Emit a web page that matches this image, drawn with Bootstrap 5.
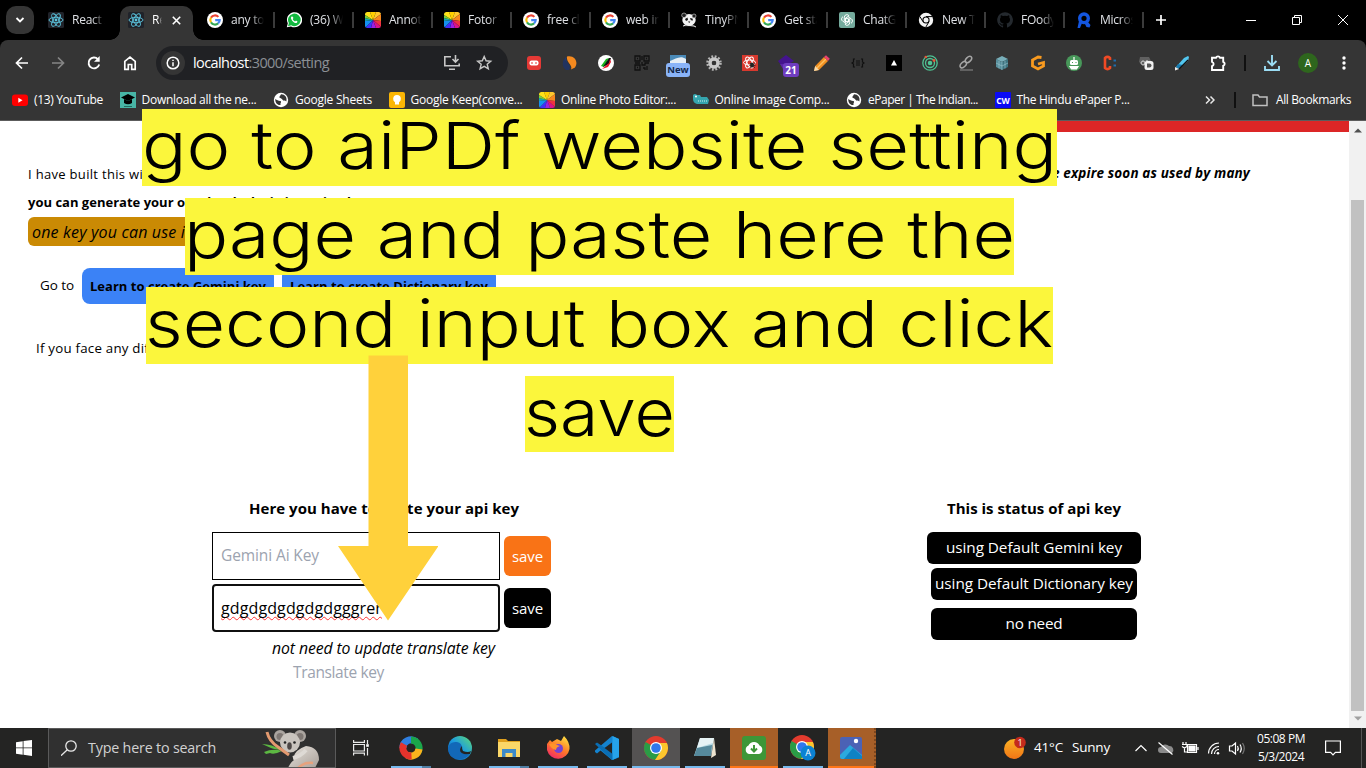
<!DOCTYPE html>
<html lang="en">
<head>
<meta charset="utf-8">
<title>Settings</title>
<link href="https://cdn.jsdelivr.net/npm/bootstrap@5.3.0/dist/css/bootstrap.min.css" rel="stylesheet">
<style>
body{width:1366px;height:768px;overflow:hidden;font-family:"Open Sans","Noto Sans",sans-serif;color:#000;background:#fff;line-height:1}
svg{display:block;flex:none}
.fit{display:inline-block;white-space:nowrap}
/* tab strip */
.tabstrip{height:40px;background:#000;font-size:12px;color:#dfe1e5}
.tab-search{width:28px;height:28px;border-radius:10px;background:#353535;margin:0 3px 0 6px}
.tab-slot{width:79px;padding-left:11px;gap:8px;position:relative}
.tab-slot.sep{border-right:2px solid #3b3b3b;height:16px}
.tab-title{width:33px;overflow:hidden;white-space:nowrap;line-height:18px;letter-spacing:-.25px;-webkit-mask-image:linear-gradient(90deg,#000 60%,transparent);mask-image:linear-gradient(90deg,#000 60%,transparent)}
.tab-active{height:34px;margin-top:6px;padding-bottom:6px;background:#353535;border-radius:10px 10px 0 0;width:73px;margin-left:4px;margin-right:3px;padding-left:8px;gap:8px;color:#fff;position:relative}
.tab-active .tab-title{width:10px}
.tab-active::before,.tab-active::after{content:"";position:absolute;bottom:0;width:10px;height:10px}
.tab-active::before{left:-10px;background:radial-gradient(circle at 0 0,transparent 9.5px,#353535 10px)}
.tab-active::after{right:-10px;background:radial-gradient(circle at 100% 0,transparent 9.5px,#353535 10px)}
/* toolbar */
.chrome-bars{background:#353535;height:81px;border-radius:8px 8px 0 0;border-bottom:1px solid #5c5c5c;color:#fff}
.chrome-wrap{background:#000}
.toolbar{height:46px;padding:0 4px}
.cell{width:36px;height:36px;display:flex;align-items:center;justify-content:center;position:relative}
.omnibox{width:352px;height:34px;border-radius:17px;background:#202124;margin:0 8px;padding-left:5px;font-size:14.5px;color:#8b8f94}
.info-dot{width:24px;height:24px;border-radius:50%;background:#353535;margin-right:8px}
.tag{position:absolute;border-radius:3px;font-weight:700;text-align:center}
.vline{width:2px;height:16px;background:#101010}
.avatar{width:20px;height:20px;border-radius:50%;background:#2e661d;font-size:10px}
.bookmarks{height:28px;padding-left:12px;gap:16.5px;font-size:12px}
.bookmarks .item{gap:6px;height:20px}
/* page */
.viewport{height:607px}
.page{width:1349px;height:607px;position:relative}
.red-bar{height:11px;width:700px;background:#dc2626}
.scroller{width:17px;background:#f1f1f1;padding:7px 0 7px}
.thumb{width:13px;height:511px;background:#c1c1c1;margin:67px 0 5px}
.gold{background:#ca8a04;width:400px;height:29px;border-radius:6px;padding-left:4px;font-size:16px;font-style:italic;font-weight:500}
.learn{background:#3b82f6;height:36px;border-radius:8px;font-size:13px;font-weight:700;padding:0 8px}
.dark-chip{width:54px;height:28px;border-radius:8px;background:#1b1b1b;margin-top:2px}
.key-input{width:288px;height:48px;border:1px solid #000;padding-left:8px;font-size:15.5px;color:#9ca3af}
.key-input.focused{border:2px solid #101010;border-radius:4px;padding-left:7px;color:#000}
.save{width:47px;height:40px;border-radius:6px;color:#fff;font-size:15px}
.misspelt{font-size:16px;text-decoration:underline wavy #f33 1px;text-underline-offset:2px;text-decoration-skip-ink:none}
.status{background:#000;color:#fff;height:32px;border-radius:6px;width:206px;font-size:15.3px}
.caption{position:absolute;left:0;top:-11.7px;width:1199px;gap:12.4px}
.caption svg{background:#fbf63c}
.caption text{font-family:"Inter","Lato",sans-serif;font-weight:300;font-size:65px}
.arrow{position:absolute;left:338px;top:234px}
/* taskbar */
.taskbar{height:40px;background:#242423;color:#fff}
.searchbox{width:288px;height:40px;border:1px solid #5a5a5a;background:#303030;padding-left:12px;color:#d2d2d2;font-size:14.3px}
.app{width:48px;height:40px;margin-right:1px;display:flex;align-items:center;justify-content:center;position:relative;padding-bottom:1px}
.app.run::after{content:"";position:absolute;left:4px;right:4px;bottom:0;height:2px;background:#76b9ed}
.app.many::after{background:linear-gradient(90deg,#76b9ed 31px,#4f7ea3 31px)}
.app.front{background:#545252}
.app.front::after,.app.alert-on::after{left:0;right:0}
.app.alert-on{background:#a75f28}
.app.alert-on::after{background:#ff7518}
.clock{font-size:12px;line-height:18px;width:50px}
</style>
</head>
<body>
<svg width="0" height="0" class="position-absolute">
<defs>
<linearGradient id="edgeG" x1="0" y1="1" x2="1" y2="0"><stop offset="0" stop-color="#0b4fa0"/><stop offset=".5" stop-color="#1c9be0"/><stop offset="1" stop-color="#5edc74"/></linearGradient>
<linearGradient id="foxG" x1="0.8" y1="0" x2=".2" y2="1"><stop offset="0" stop-color="#ffe040"/><stop offset=".5" stop-color="#ff7a28"/><stop offset="1" stop-color="#f0246a"/></linearGradient>
<linearGradient id="sunG" x1="0" y1="0" x2="0" y2="1"><stop offset="0" stop-color="#fbb324"/><stop offset="1" stop-color="#f27516"/></linearGradient>
<linearGradient id="furG" x1="0" y1="0" x2="1" y2="1"><stop offset="0" stop-color="#e8e4de"/><stop offset="1" stop-color="#a89f98"/></linearGradient>
<symbol id="react" viewBox="0 0 16 16"><rect width="16" height="16" rx="1.5" fill="#20232a"/><g fill="none" stroke="#5cc6e0" stroke-width=".9"><ellipse cx="8" cy="8" rx="7" ry="2.7"/><ellipse cx="8" cy="8" rx="7" ry="2.7" transform="rotate(60 8 8)"/><ellipse cx="8" cy="8" rx="7" ry="2.7" transform="rotate(120 8 8)"/></g><circle cx="8" cy="8" r="1.4" fill="#5cc6e0"/></symbol>
<symbol id="goog" viewBox="0 0 16 16"><circle cx="8" cy="8" r="8" fill="#fff"/><g fill="none" stroke-width="2.1"><path d="M11.4 4.9A4.7 4.7 0 0 0 4 5.6" stroke="#ea4335"/><path d="M4 5.6a4.7 4.7 0 0 0 0 4.8" stroke="#fbbc05"/><path d="M4 10.4a4.7 4.7 0 0 0 7.1 1" stroke="#34a853"/><path d="M11.1 11.4a4.6 4.6 0 0 0 1.6-3.3H8.2" stroke="#4285f4"/></g></symbol>
<symbol id="wa" viewBox="0 0 16 16"><path d="M.8 15.3l1-4A7.6 7.6 0 1 1 5 14.5z" fill="#fff"/><path d="M2 14.2l.9-3.2A6.3 6.3 0 1 1 5.200 13.300z" fill="#12b93f"/><path d="M5.600 4.600c-1 .8-.8 2.300.6 4.100 1.700 2 3.600 2.800 4.700 2 .8-.7.6-1.200-.1-1.600-1-.6-1.100-.5-1.700.3-1-.3-2-1.300-2.400-2.300.7-.6.8-.8.5-1.500-.4-1-.9-1.500-1.600-1z" fill="#fff"/></symbol>
<symbol id="fotor" viewBox="0 0 16 16"><clipPath id="rc"><rect width="16" height="16" rx="2.500"/></clipPath><g clip-path="url(#rc)"><path d="M8 8L0 3V0h5z" fill="#ffe21a"/><path d="M8 8L5 0h6z" fill="#ffd000"/><path d="M8 8l3-8h5v2z" fill="#ffc82e"/><path d="M8 8l8-6v7z" fill="#f7881f"/><path d="M8 8l8 1v6z" fill="#ef3340"/><path d="M8 8l8 7v1h-5z" fill="#d9138a"/><path d="M8 8l3 8H6z" fill="#9a20e0"/><path d="M8 8l-2 8H0z" fill="#3f30f8"/><path d="M8 8l-8 8V9z" fill="#1590f0"/><path d="M8 8L0 9V6z" fill="#17a9b0"/><path d="M8 8L0 6V3z" fill="#7ad038"/></g></symbol>
<symbol id="panda" viewBox="0 0 16 16"><ellipse cx="8" cy="8" rx="6.700" ry="6" fill="#f2f2f2"/><circle cx="3" cy="3.300" r="2.300" fill="#202020" stroke="#ddd" stroke-width=".6"/><circle cx="13" cy="4" r="2" fill="#202020" stroke="#ddd" stroke-width=".6"/><path d="M4 7l2.500-1.500L7 8 5 9zM9 6l2.500.5.5 2-2.200-.3zM7 9.500h2.400L8.200 11zM4 13c3 2 8 1 9-1l2 3H2z" fill="#151515"/><path d="M2 14l3-1 8 1 2 1" stroke="#eee" fill="none"/></symbol>
<symbol id="gpt" viewBox="0 0 16 16"><rect width="16" height="16" rx="2" fill="#74aa9c"/><g fill="none" stroke="#fff" stroke-width="1"><path d="M5.300 9.500V5.200a2.600 2.600 0 0 1 4.800-1.300L6.500 6v4.600M6.700 11l-3-1.800A2.600 2.600 0 0 1 4 4.700M9.300 5l3 1.800a2.600 2.600 0 0 1-.3 4.500M10.700 6.500v4.300a2.600 2.600 0 0 1-4.800 1.300l3.600-2V6.500"/><path d="M6.500 7.200L8 6.300l1.500.9v1.700L8 9.700l-1.500-.8z"/></g></symbol>
<symbol id="chromew" viewBox="0 0 16 16"><circle cx="8" cy="8" r="7.200" fill="#f4f4f4"/><circle cx="8" cy="8" r="3.600" fill="#000"/><circle cx="8" cy="8" r="2.500" fill="#f4f4f4"/><path d="M8 4.600h6.500M5 9.700L1.900 4.500M11 9.700L7.800 15.100" stroke="#000" stroke-width="1"/></symbol>
<symbol id="gh" viewBox="0 0 16 16"><path d="M8 .2a7.800 7.800 0 0 0-2.500 15.200c.4.1.6-.2.600-.4v-1.500c-2.200.5-2.700-1-2.700-1-.4-.9-.9-1.100-.9-1.100-.7-.5.100-.5.100-.5.800.1 1.200.8 1.200.8.700 1.200 1.900.9 2.300.7.100-.5.300-.9.500-1.100-1.800-.2-3.600-.9-3.600-3.900 0-.9.300-1.500.8-2.100-.1-.2-.4-1 .1-2.100 0 0 .7-.2 2.100.8a7 7 0 0 1 4 0c1.500-1 2.100-.8 2.100-.8.500 1.100.2 1.900.1 2.100.5.600.8 1.200.8 2.100 0 3-1.800 3.700-3.600 3.900.3.200.6.700.6 1.500V15c0 .2.100.5.600.4A7.800 7.800 0 0 0 8 .2z" fill="#24292e"/></symbol>
<symbol id="rq" viewBox="0 0 16 16"><circle cx="8" cy="6.300" r="4.300" fill="none" stroke="#1456e0" stroke-width="3.400"/><path d="M3 9l3 2-2 5H1.500zM8 10l3.500-.5 3 3.500-1 2.500-3-.5z" fill="#1456e0"/></symbol>
<symbol id="globe" viewBox="0 0 16 16"><circle cx="8" cy="8" r="7.200" fill="#fff"/><path d="M2.200 7C4 8 5.500 9.200 7.500 9c1 .5.5 1.500 0 2.200V13c-3 .4-5.300-2-5.300-6zM8 2.200c-.5 1.500-2 2-1.500 3.500 1 .6 2.500.5 3 2 .7 1.500 3 .3 3.800 1.800C14.500 5 11.500 2 8 2.200z" fill="#353535"/></symbol>
<symbol id="chrome" viewBox="0 0 24 24"><circle cx="12" cy="12" r="12" fill="#e33b2e"/><path d="M12 12L1.600 6A12 12 0 0 0 11 24l6.500-9z" fill="#2a9c46"/><path d="M12 7h10.900A12 12 0 0 1 11 24l6-9z" fill="#fcc62d"/><circle cx="12" cy="12" r="6" fill="#fff"/><circle cx="12" cy="12" r="4.800" fill="#3078ec"/></symbol>
</defs>
</svg>

<div class="tabstrip d-flex align-items-center">
  <div class="tab-search d-flex align-items-center justify-content-center"><svg width="10" height="8" fill="none" stroke="#fff" stroke-width="1.800"><path d="M1.500 2L5 5.500 8.500 2"/></svg></div>
  <div class="tab-slot d-flex align-items-center"><svg width="16" height="16"><use href="#react"/></svg><div class="tab-title">React App</div></div>
  <div class="tab-active d-flex align-items-center"><svg width="16" height="16"><use href="#react"/></svg><div class="tab-title">Re</div><svg width="9" height="9" style="margin-left:2px" stroke="#fff" stroke-width="1.600"><path d="M.8.800l7.400 7.400M8.200.800L.8 8.200"/></svg></div>
  <div class="tab-slot sep d-flex align-items-center"><svg width="16" height="16"><use href="#goog"/></svg><div class="tab-title">any tools</div></div>
  <div class="tab-slot sep d-flex align-items-center"><svg width="16" height="16"><use href="#wa"/></svg><div class="tab-title">(36) Wh</div></div>
  <div class="tab-slot sep d-flex align-items-center"><svg width="16" height="16"><use href="#fotor"/></svg><div class="tab-title">Annotate</div></div>
  <div class="tab-slot sep d-flex align-items-center"><svg width="16" height="16"><use href="#fotor"/></svg><div class="tab-title">Fotor - </div></div>
  <div class="tab-slot sep d-flex align-items-center"><svg width="16" height="16"><use href="#goog"/></svg><div class="tab-title">free clip</div></div>
  <div class="tab-slot sep d-flex align-items-center"><svg width="16" height="16"><use href="#goog"/></svg><div class="tab-title">web im</div></div>
  <div class="tab-slot sep d-flex align-items-center"><svg width="16" height="16"><use href="#panda"/></svg><div class="tab-title">TinyPNG</div></div>
  <div class="tab-slot sep d-flex align-items-center"><svg width="16" height="16"><use href="#goog"/></svg><div class="tab-title">Get start</div></div>
  <div class="tab-slot sep d-flex align-items-center"><svg width="16" height="16"><use href="#gpt"/></svg><div class="tab-title">ChatGPT</div></div>
  <div class="tab-slot sep d-flex align-items-center"><svg width="16" height="16"><use href="#chromew"/></svg><div class="tab-title">New Tab</div></div>
  <div class="tab-slot sep d-flex align-items-center"><svg width="16" height="16"><use href="#gh"/></svg><div class="tab-title">FOody</div></div>
  <div class="tab-slot sep d-flex align-items-center"><svg width="16" height="16"><use href="#rq"/></svg><div class="tab-title">Microso</div></div>
  <svg width="221" height="40" fill="none" stroke="#fff"><path d="M12 20h10M17 15v10" stroke-width="1.700"/><path d="M102 20.500h10M148.500 17.500h7v7h-7zM150.500 17.500v-2h7v7h-2M194 15l10 10M204 15l-10 10"/></svg>
</div>

<div class="chrome-wrap">
<div class="chrome-bars">
  <div class="toolbar d-flex align-items-center">
    <div class="cell"><svg width="16" height="16" fill="none" stroke="#fff" stroke-width="1.700"><path d="M14 8H3M8 2.500L2.500 8 8 13.500"/></svg></div>
    <div class="cell"><svg width="16" height="16" fill="none" stroke="#858585" stroke-width="1.700"><path d="M2 8h11M8 2.500L13.500 8 8 13.500"/></svg></div>
    <div class="cell"><svg width="16" height="16" fill="none" stroke="#fff" stroke-width="1.900"><path d="M13.200 9.500A5.400 5.400 0 1 1 12 4.300"/><path d="M13.700 1v5.700H8z" fill="#fff" stroke="none"/></svg></div>
    <div class="cell"><svg width="16" height="16" fill="none" stroke="#fff" stroke-width="1.700"><path d="M2.800 6.300L8 2.200l5.200 4.100v8H9.700V9.500H6.300v4.800H2.800z"/></svg></div>
    <div class="omnibox d-flex align-items-center">
      <div class="info-dot d-flex align-items-center justify-content-center"><svg width="14" height="14"><circle cx="7" cy="7" r="5.800" fill="none" stroke="#fff" stroke-width="1.500"/><path d="M7 6.300v4M7 3.700v1.400" stroke="#fff" stroke-width="1.500"/></svg></div>
      <span class="fit" data-w="136"><span class="text-white">localhost</span>:3000/setting</span>
      <svg class="ms-auto" width="65" height="18" fill="none" stroke="#c7c7c7" stroke-width="1.600"><path d="M8 2.800H1.800v9h14.400V9.500M6 15.300h6M12.500 1v6M9.500 5l3 3 3-3"/><path d="M41.200 2.500l1.900 4.300 4.600.4-3.500 3 1.100 4.500-4.100-2.400-4.100 2.400 1.100-4.500-3.500-3 4.600-.4z" stroke-width="1.400"/></svg>
    </div>
    <div class="cell"><svg width="16" height="16"><rect x="1" y="1" width="14" height="14" rx="3" fill="#e53935"/><rect x="3.500" y="5.500" width="9" height="5" rx="2" fill="#fff"/><path d="M5 8h2M9 8h2" stroke="#e53935"/></svg></div>
    <div class="cell"><svg width="16" height="16"><path d="M5 1c-3 3 2 6 1 13C1 13-1 6 5 1z" fill="#223a70"/><path d="M2.500 4c2 4 8 6 4.500 11H4C0 12 0 7 2.500 4z" fill="#22335f"/><path d="M5 1.500c7-2 12 5 8 11l-4 2c2-5-5-7-4-13z" fill="#f58a1f"/></svg></div>
    <div class="cell"><svg width="16" height="16"><circle cx="8" cy="8" r="8" fill="#fff"/><path d="M3 11l5-7 3-1-5 9z" fill="#19b51e"/><path d="M5 12l6-9 2 0-2 6z" fill="#111"/><path d="M4 14l7-6 1-4 1 3-3 5z" fill="#e8152a"/></svg></div>
    <div class="cell"><svg width="16" height="16" fill="none" stroke="#111" stroke-width="1.300"><path d="M1 1h5v5H1zM10 1h5v5h-5zM1 10h5v5H1z"/><path d="M3 3.500h1M12 3.500h1M3 12.500h1M8 1v4M1 8h5M8 7v3h3V8h4M9 13h2v2M13 11v4"/></svg></div>
    <div class="cell"><svg width="16" height="16"><rect width="16" height="15" fill="#e6eef5"/><path d="M0 0h16v4C10 0 6 4 0 6z" fill="#4a8ab8"/></svg><span class="tag" style="left:6px;top:18px;width:24px;height:14px;background:#8ab4f8;color:#14284a;font-size:9.500px;line-height:14px">New</span></div>
    <div class="cell"><svg width="16" height="16"><circle cx="8" cy="8" r="6.500" fill="none" stroke="#b5b5b5" stroke-width="2.500" stroke-dasharray="1.800 1.600"/><circle cx="8" cy="8" r="4" fill="none" stroke="#c8c8c8" stroke-width="3.400"/><circle cx="8" cy="8" r="2" fill="#333"/></svg></div>
    <div class="cell"><svg width="16" height="16"><rect width="16" height="16" fill="#d8392e"/><g fill="none" stroke="#fff"><ellipse cx="7.500" cy="7.500" rx="6" ry="2.500"/><ellipse cx="7.500" cy="7.500" rx="6" ry="2.500" transform="rotate(60 7.500 7.500)"/><ellipse cx="7.500" cy="7.500" rx="6" ry="2.500" transform="rotate(120 7.500 7.500)"/></g><ellipse cx="10" cy="10" rx="2" ry="2.500" fill="#222"/><path d="M8 8l5 5M13 8l-5 5M7.500 10.500h6" stroke="#222" stroke-width=".7"/></svg></div>
    <div class="cell"><svg width="16" height="16"><path d="M8 0l8 6-5 3-8 1-3-4z" fill="#44148e"/><path d="M2 9h8v5H5z" fill="#5a25a8"/></svg><span class="tag" style="left:15px;top:18px;width:16px;height:14px;background:#6f3dc0;color:#fff;font-size:10px;line-height:14px">21</span></div>
    <div class="cell"><svg width="16" height="16"><path d="M0 16l1.200-5L10 2l4 4-9 9z" fill="#ef8f22"/><path d="M3 13L12 4" stroke="#ffc05c" stroke-width="1.500"/><path d="M10 2l2-1.800 3.800 3.600L14 6z" fill="#e8416d"/><path d="M0 16l1.200-5L5 15z" fill="#f7dcae"/></svg></div>
    <div class="cell"><svg width="14" height="10" fill="none" stroke="#111" stroke-width="1.200"><path d="M4 1H2.500v3L1 5l1.500 1v3H4M10 1h1.500v3L13 5l-1.500 1v3H10M5 3h4M5 5h4M5 7h4"/></svg></div>
    <div class="cell"><svg width="16" height="16"><path d="M0 0h16v16H0z"/><path d="M8 5l3 5.500H5z" fill="#fff"/></svg></div>
    <div class="cell"><svg width="16" height="16" fill="none" stroke="#4fc493" stroke-width="1.300"><circle cx="8" cy="8" r="7.200"/><circle cx="8" cy="8" r="4.500"/><circle cx="8" cy="8" r="1.600" fill="#4fc493"/><circle cx="3.800" cy="2" r="1.300" fill="#e25a3a" stroke="none"/><circle cx="12" cy="5.500" r="1.400" fill="#e25a3a" stroke="none"/></svg></div>
    <div class="cell"><svg width="16" height="16" fill="none" stroke="#a5a5a5" stroke-width="1.500"><ellipse cx="10.500" cy="4.500" rx="3.800" ry="2.300" transform="rotate(-45 10.500 4.500)"/><ellipse cx="5.300" cy="9.700" rx="3.800" ry="2.300" transform="rotate(-45 5.300 9.700)"/><path d="M2 15h13" stroke="#707070"/></svg></div>
    <div class="cell"><svg width="16" height="16"><path d="M8 1l6 3-6 3-6-3z" fill="#78aeb9"/><path d="M2 4l6 3v8l-6-3z" fill="#578e9b"/><path d="M14 4L8 7v8l6-3z" fill="#3e7480"/><path d="M8 7v8M5 5.500v8M11 5.500v8M2 8l6 3 6-3" stroke="#9cc8d0" stroke-width=".6" fill="none"/></svg></div>
    <div class="cell"><svg width="16" height="16" fill="none" stroke="#f89a1f" stroke-width="2.800"><path d="M11.500 2.500L8 2 2.500 5v6L8 14l5.500-3V7.500L8 9"/></svg></div>
    <div class="cell"><svg width="16" height="16"><circle cx="8" cy="8" r="8" fill="#48985a"/><rect x="4" y="5" width="8" height="5" rx="1.500" fill="#fff"/><path d="M8 2v3M4 11.500h8L10.500 14h-5z" stroke="#fff" fill="#fff" stroke-width="1.200"/><path d="M6 7h1v1H6zM9.500 7h1v1h-1z" fill="#48985a"/></svg></div>
    <div class="cell"><svg width="16" height="16"><path d="M8 5V3Q5.500 .8 3 3v10Q5.500 15.200 8 13v-2" fill="none" stroke="#f04a25" stroke-width="2.600"/><path d="M11.500 4.500H14v2h-2.500zM11.500 9.500H14v2h-2.500z" fill="#1f6dad"/></svg></div>
    <div class="cell"><svg width="16" height="16"><path d="M2 2h9l2 4v4H5L1 7z" fill="#606060"/><path d="M5 6a2 2 0 1 0 .1 0zM9 5v5" fill="none" stroke="#ddd"/><rect x="6.500" y="6" width="9" height="9" rx="2.500" fill="#f1f1f1"/><path d="M9 8.500h2.500a2 2 0 0 1 0 4H9z" fill="#555"/></svg></div>
    <div class="cell"><svg width="16" height="16"><path d="M2 12L10 3l4-2 1 1-1 4-9 8z" fill="#52c6ef"/><path d="M2 12l2-3 5 1-4 4z" fill="#187cb2"/><path d="M1 12l4 2-4 1.500z" fill="#eee"/><path d="M5 14l9-9" stroke="#111" stroke-width="1.200"/></svg></div>
    <div class="cell"><svg width="18" height="18" fill="none" stroke="#fff" stroke-width="1.900"><path d="M3 3.800h4a2.100 2.100 0 0 1 4 0h3.200v4a2.100 2.100 0 0 1 0 4v4.200H3v-3.800a2.300 2.300 0 0 0 0-4.400z"/></svg></div>
    <div style="width:18px" class="d-flex justify-content-center"><div class="vline"></div></div>
    <div class="cell"><svg width="16" height="16" fill="none" stroke="#9bdcf3" stroke-width="1.900"><path d="M8 0v10M3.500 6L8 10.500 12.500 6M1 11v4h14v-4"/></svg></div>
    <div class="cell"><div class="avatar d-flex align-items-center justify-content-center">A</div></div>
    <div class="cell"><svg width="4" height="16" fill="#fff"><circle cx="2" cy="3" r="1.700"/><circle cx="2" cy="8" r="1.700"/><circle cx="2" cy="13" r="1.700"/></svg></div>
  </div>
  <div class="bookmarks d-flex align-items-center">
    <div class="item d-flex align-items-center"><svg width="16" height="16"><rect y="2.500" width="16" height="11.500" rx="3" fill="#f00"/><path d="M6.300 5.800v5l4.200-2.500z" fill="#fff"/></svg><span class="fit" data-w="69">(13) YouTube</span></div>
    <div class="item d-flex align-items-center"><svg width="16" height="16"><rect width="16" height="16" fill="#48b5a6"/><path d="M8 2l7 3.500L8 9 1 5.500z"/><path d="M4 7v4q4 2.500 8 0V7L8 9z"/><path d="M4 14.500h8" stroke="#226b60"/></svg><span class="fit" data-w="115">Download all the ne...</span></div>
    <div class="item d-flex align-items-center"><svg width="16" height="16"><use href="#globe"/></svg><span class="fit" data-w="77">Google Sheets</span></div>
    <div class="item d-flex align-items-center"><svg width="16" height="16"><rect width="16" height="16" rx="2" fill="#fbb604"/><circle cx="8" cy="6.800" r="3.800" fill="#fff"/><path d="M6 9h4v3.500H6z" fill="#fff"/></svg><span class="fit" data-w="112">Google Keep(conve...</span></div>
    <div class="item d-flex align-items-center"><svg width="16" height="16"><use href="#fotor"/></svg><span class="fit" data-w="115">Online Photo Editor:...</span></div>
    <div class="item d-flex align-items-center"><svg width="16" height="16"><path d="M0 3q2-2 4 0h3l1 2h6l2 3-1 4H4Q0 11 0 7z" fill="#35a5ae"/><path d="M5 9h9" stroke="#d8f0f2" stroke-dasharray="1 1"/><circle cx="3" cy="4.500" r="1" fill="#fff"/></svg><span class="fit" data-w="115">Online Image Comp...</span></div>
    <div class="item d-flex align-items-center"><svg width="16" height="16"><use href="#globe"/></svg><span class="fit" data-w="110">ePaper | The Indian...</span></div>
    <div class="item d-flex align-items-center"><svg width="16" height="16"><rect width="16" height="16" rx="1" fill="#0a0af5"/><text x="8" y="11.500" text-anchor="middle" font-size="8.500" font-weight="700" fill="#fff">CW</text></svg><span class="fit" data-w="113">The Hindu ePaper P...</span></div>
    <svg width="10" height="10" class="ms-auto" fill="none" stroke="#e8e8e8" stroke-width="1.500" style="margin-right:2px"><path d="M1 1.500L4.500 5 1 8.500M5.500 1.500L9 5 5.500 8.500"/></svg>
    <div class="vline"></div>
    <div class="item d-flex align-items-center" style="gap:8px;padding-right:15px"><svg width="16" height="14" fill="none" stroke="#c0c0c0" stroke-width="1.500"><path d="M1 12V2h5l1.500 2H15v8.500H1z"/></svg><span class="fit" data-w="75">All Bookmarks</span></div>
  </div>
</div>
</div>

<div class="viewport d-flex">
  <main class="page">
    <div class="red-bar ms-auto"></div>
    <div class="d-flex align-items-center" style="height:22px;margin:31px 99px 0 28px;font-size:13px">
      <span class="fit" data-w="115">I have built this wi</span>
      <b class="ms-auto fst-italic fit" data-w="198" style="font-size:13.500px">e expire soon as used by many</b>
    </div>
    <div class="d-flex align-items-center fw-bold" style="height:22px;margin:6px 0 0 28px;font-size:13px"><span class="fit" data-w="157">you can generate your o</span><span class="fit" data-w="188">wn key by login it's 5 simple st</span></div>
    <div class="gold d-flex align-items-center" style="margin:4px 0 0 28px"><span class="fit" data-w="153">one key you can use i</span></div>
    <div class="d-flex align-items-center" style="margin:22px 0 0 40px;gap:8px;font-size:13.500px">
      <span class="fit" data-w="34">Go to</span>
      <div class="learn d-flex align-items-center"><span class="fit" data-w="176">Learn to create Gemini key</span></div>
      <div class="learn d-flex align-items-center"><span class="fit" data-w="198">Learn to create Dictionary key</span></div>
    </div>
    <div class="d-flex align-items-center" style="height:28px;margin:31px 0 0 36px;gap:147px;font-size:13.300px">
      <span class="fit" data-w="113">If you face any dif</span><div class="dark-chip"></div>
    </div>
    <div class="d-flex" style="margin-top:135px">
      <section style="width:339px;margin-left:212px">
        <div class="fw-bold" style="padding-left:37px;height:35px;font-size:15px;line-height:22px;margin-top:-1px"><span class="fit" data-w="270">Here you have to paste your api key</span></div>
        <div class="d-flex align-items-center justify-content-between mb-1"><div class="key-input d-flex align-items-center"><span class="fit" data-w="98">Gemini Ai Key</span></div><div class="save d-flex align-items-center justify-content-center" style="background:#f97316"><span class="fit" data-w="31">save</span></div></div>
        <div class="d-flex align-items-center justify-content-between"><div class="key-input focused d-flex align-items-center"><span class="fit misspelt" data-w="161">gdgdgdgdgdgdgggrer</span></div><div class="save d-flex align-items-center justify-content-center bg-black"><span class="fit" data-w="31">save</span></div></div>
        <div class="fst-italic" style="padding-left:60px;font-size:15.800px;line-height:24px;margin-top:4px"><span class="fit" data-w="223">not need to update translate key</span></div>
        <div style="padding-left:81px;font-size:15.500px;line-height:24px;color:#9ca3af"><span class="fit" data-w="91">Translate key</span></div>
      </section>
      <section class="d-flex flex-column align-items-center" style="width:214px;margin-left:376px">
        <div class="fw-bold" style="height:35px;font-size:15px;line-height:22px;margin-top:-1px"><span class="fit" data-w="174">This is status of api key</span></div>
        <div class="status d-flex align-items-center justify-content-center w-100 mb-1"><span class="fit" data-w="176">using Default Gemini key</span></div>
        <div class="status d-flex align-items-center justify-content-center mb-2"><span class="fit" data-w="198">using Default Dictionary key</span></div>
        <div class="status d-flex align-items-center justify-content-center"><span class="fit" data-w="57">no need</span></div>
      </section>
    </div>
    <div class="caption d-flex flex-column align-items-center">
      <svg width="915" height="76.500"><text x="0" y="59.500" textLength="915" lengthAdjust="spacingAndGlyphs">go to aiPDf website setting</text></svg>
      <svg width="829" height="76.500"><text x="-1" y="59.500" textLength="831" lengthAdjust="spacingAndGlyphs">page and paste here the</text></svg>
      <svg width="907" height="76.500"><text x="-1" y="59.500" textLength="908" lengthAdjust="spacingAndGlyphs">second input box and click</text></svg>
      <svg width="149" height="76.500"><text x="-1" y="59.500" textLength="151" lengthAdjust="spacingAndGlyphs">save</text></svg>
    </div>
    <svg class="arrow" width="100" height="266"><path d="M30.500 0.500h39.500v190.500h30.500L50 265.500 0 191h30.500z" fill="#ffd13b"/></svg>
  </main>
  <div class="scroller d-flex flex-column align-items-center">
    <svg width="8" height="5" fill="#505050"><path d="M0 4.500L4 0.500 8 4.500z"/></svg>
    <div class="thumb"></div>
    <svg width="8" height="5" fill="#a0a0a0"><path d="M0 .5h8L4 4.500z"/></svg>
  </div>
</div>

<div class="taskbar d-flex align-items-center">
  <div style="width:48px" class="d-flex justify-content-center"><svg width="16" height="16" fill="#fff"><path d="M0 2.200L6.700 1.200v6.300H0zM7.500 1.100L16 0v7.500H7.500zM0 8.300h6.700v6.400L0 13.800zM7.500 8.300H16V16l-8.500-1.200z"/></svg></div>
  <div class="searchbox d-flex align-items-center">
    <svg width="16" height="16" fill="none" stroke="#e8e8e8" stroke-width="1.300"><circle cx="10" cy="6" r="5.200"/><path d="M6.300 9.700L0 15.700"/></svg>
    <span class="fit" data-w="128" style="margin-left:11px">Type here to search</span>
    <svg width="58" height="38" class="ms-auto" style="margin-right:15px">
      <path d="M0 15q10 0 19 6-8-1-10-2zM2 23q9-4 18-1-8 4-12 2l-4 1z" fill="#5cb842"/>
      <path d="M26 39q2-5 6-8-2-9 12-14 13 1 13 14l-4 8z" fill="url(#furG)"/>
      <circle cx="18" cy="7" r="6" fill="#aaa49f"/><circle cx="38" cy="7" r="6" fill="#aaa49f"/><circle cx="18" cy="7.500" r="3.500" fill="#7e7773"/><circle cx="38" cy="7.500" r="3.500" fill="#7e7773"/>
      <ellipse cx="28" cy="13.500" rx="10" ry="10" fill="#c9c4be"/>
      <path d="M5 3q2 9 11 15l11 8" fill="none" stroke="#e39a70" stroke-width="3"/>
      <path d="M36 39q6-6 15-5" stroke="#e7a27e" stroke-width="2.500" fill="none"/>
      <ellipse cx="27.500" cy="17" rx="2.300" ry="3.800" fill="#4d4746"/><circle cx="23" cy="13.500" r="1.300" fill="#222"/><circle cx="32.500" cy="13.500" r="1.300" fill="#222"/>
      <path d="M31 29q8-2 13-8" stroke="#dedad5" stroke-width="4" fill="none"/>
    </svg>
  </div>
  <div style="width:51px" class="d-flex justify-content-center"><svg width="17" height="16" fill="none" stroke="#e8e8e8" stroke-width="1.200"><path d="M.6 0v2.400h10.800V0M.6 15.500v-2.400h10.800v2.400M.6 4.500h10.800v6.500H.6zM14.500 0v4M14.500 8v7.500"/><path d="M13.200 4.200h2.600v2.600h-2.600z" fill="#fff" stroke="none"/></svg></div>
  <div class="app run many"><svg width="24" height="24" fill="none" stroke-width="7"><path d="M3.900 12A8.100 8.100 0 0 1 17 5.600" stroke="#2f7fe0"/><path d="M12 3.900A8.100 8.100 0 0 1 19 16" stroke="#1aa64b"/><path d="M20 13a8.100 8.100 0 0 1-12 6" stroke="#fbb31d"/><path d="M12.500 20.100A8.100 8.100 0 0 1 5 8" stroke="#e5332c"/></svg></div>
  <div class="app"><svg width="24" height="24"><circle cx="12" cy="12" r="12" fill="url(#edgeG)"/><path d="M0 12Q2 5 9 6q5 1 5 6-2 1-1 4 3 3 9 2-4 6-12 5Q0 22 0 12z" fill="#1268b8"/><path d="M12 14q0-2 2-4 0 4 1 5 5 2 8 0l-1 3q-10 1-10-4z" fill="#242423"/></svg></div>
  <div class="app run many"><svg width="22" height="20"><path d="M0 1h8l2 2h12v16H0z" fill="#e0a01d"/><path d="M0 4h22v15H0z" fill="#fbd768"/><path d="M4 19v-8h14v8h-3.500v-4h-7v4z" fill="#3c8ac9"/></svg></div>
  <div class="app run"><svg width="24" height="24"><path d="M1 8l3-4 2 2 5-3 4 2 3-5q6 6 5.500 13A11.500 11.500 0 0 1 1 14z" fill="url(#foxG)"/><circle cx="12.500" cy="12.500" r="4.500" fill="#7542d2"/><path d="M3 8q5-2 8 1l3 1q-4 1-4 4-5-1-7-6z" fill="#ff9429"/></svg></div>
  <div class="app run"><svg width="24" height="24"><path d="M17 0l7 3v18l-7 3L5.500 14.500 2 17.500 0 16v-1.500L17 0z" fill="#1483cf"/><path d="M0 8l2-1.500 22 15L17 24z" fill="#0a6eb4"/><path d="M17 6.500v11L9.500 12z" fill="#242423"/><path d="M17.500 0L24 3v18l-6.500 3z" fill="#26a3eb"/></svg></div>
  <div class="app run front"><svg width="24" height="24"><use href="#chrome"/></svg></div>
  <div class="app run"><svg width="24" height="22"><path d="M7 1h14l-3 18H1z" fill="#b7d9e2"/><path d="M7 1h14l-1 5L4 11z" fill="#e7f3f5"/><path d="M4 11l15-3-1 11H1z" fill="#568a9c"/><path d="M21 1l2 17-5 3z" fill="#ece3cf"/></svg></div>
  <div class="app run alert-on"><svg width="24" height="24"><rect width="24" height="24" rx="3" fill="#3d9638"/><path d="M7 18a4.500 4.500 0 0 1-.5-8.500 6 6 0 0 1 11 0A4.500 4.500 0 0 1 17 18z" fill="#fff"/><path d="M12 9v6M9 12.500l3 3 3-3" stroke="#3d9638" stroke-width="2" fill="none"/></svg></div>
  <div class="app run"><svg width="26" height="27"><use href="#chrome" x="0" y="1" width="24" height="24"/><circle cx="18" cy="19" r="7.500" fill="#0b82d3"/><text x="18" y="22.300" font-size="9" text-anchor="middle" fill="#fff">A</text></svg></div>
  <div class="app run alert-on" style="border-right:2px dotted #7e461c"><svg width="22" height="22"><rect width="22" height="22" rx="2" fill="#4b62b5"/><path d="M0 18L10 8l12 10v2q0 2-2 2H2q-2 0-2-2z" fill="#2ba9de"/><path d="M4 22l9-11 9 8v3z" fill="#0f82c4"/><circle cx="16" cy="4" r="2.200" fill="#fff"/></svg></div>
  <div class="d-flex align-items-center ms-auto" style="font-size:13.500px">
    <svg width="24" height="24" style="margin-right:7px"><circle cx="11" cy="13" r="10" fill="url(#sunG)"/><circle cx="17" cy="6.500" r="5.800" fill="#c42b1c"/><text x="17" y="9.800" font-size="9" text-anchor="middle" fill="#fff">1</text></svg>
    <span class="fit" data-w="29">41°C</span><span class="fit" data-w="38" style="margin-left:9px">Sunny</span>
    <svg width="112" height="20" style="margin-left:24px" fill="none" stroke="#fff" stroke-width="1.200"><path d="M1.500 13L7 7.500l5.500 5.500"/><path d="M27 15a3 3 0 0 1 0-6 5 5 0 0 1 8-1 4 4 0 0 1 3 7z" fill="#8b8b8b" stroke="none"/><path d="M24.500 4.500l14 12"/><path d="M53.500 6.500h9v8h-9zM64 9v3M49 4v3M52 4v3M48 6.500h5v2l-2.500 1.500L48 8.500M50.500 10v4h3"/><path d="M55 8h6v5h-6z" fill="#fff"/><path d="M74.500 15.500A10.500 10.500 0 0 1 85 5M77.500 16A7.500 7.500 0 0 1 85 8.500M80.500 16A4.500 4.500 0 0 1 85 11.500"/><circle cx="84" cy="15.300" r="1.300" fill="#fff" stroke="none"/><path d="M95.500 8h2.500l3.500-3v11L98 13h-2.500zM103.500 8q1.500 2.500 0 5M106 6.500q2.500 4 0 8"/><path d="M108.500 5q3.500 5.500 0 11" stroke="#777"/></svg>
    <div class="clock text-center" style="margin-left:10px"><div><span class="fit" data-w="48">05:08 PM</span></div><div><span class="fit" data-w="46">5/3/2024</span></div></div>
    <svg width="16" height="16" style="margin:0 20px 0 19px" fill="none" stroke="#fff" stroke-width="1.200"><path d="M.6 1h14.800v11.400h-5L8 14.900l-2.400-2.500h-5z"/></svg>
    <div style="width:1px;height:40px;background:#555;margin-right:4px"></div>
  </div>
</div>
<script>
// Track each label to the width it is given in data-w
document.querySelectorAll('.fit[data-w]').forEach(function (el) {
  var w = +el.dataset.w, n = el.textContent.length;
  el.style.letterSpacing = (w - el.getBoundingClientRect().width) / n + 'px';
});
</script>
</body>
</html>
